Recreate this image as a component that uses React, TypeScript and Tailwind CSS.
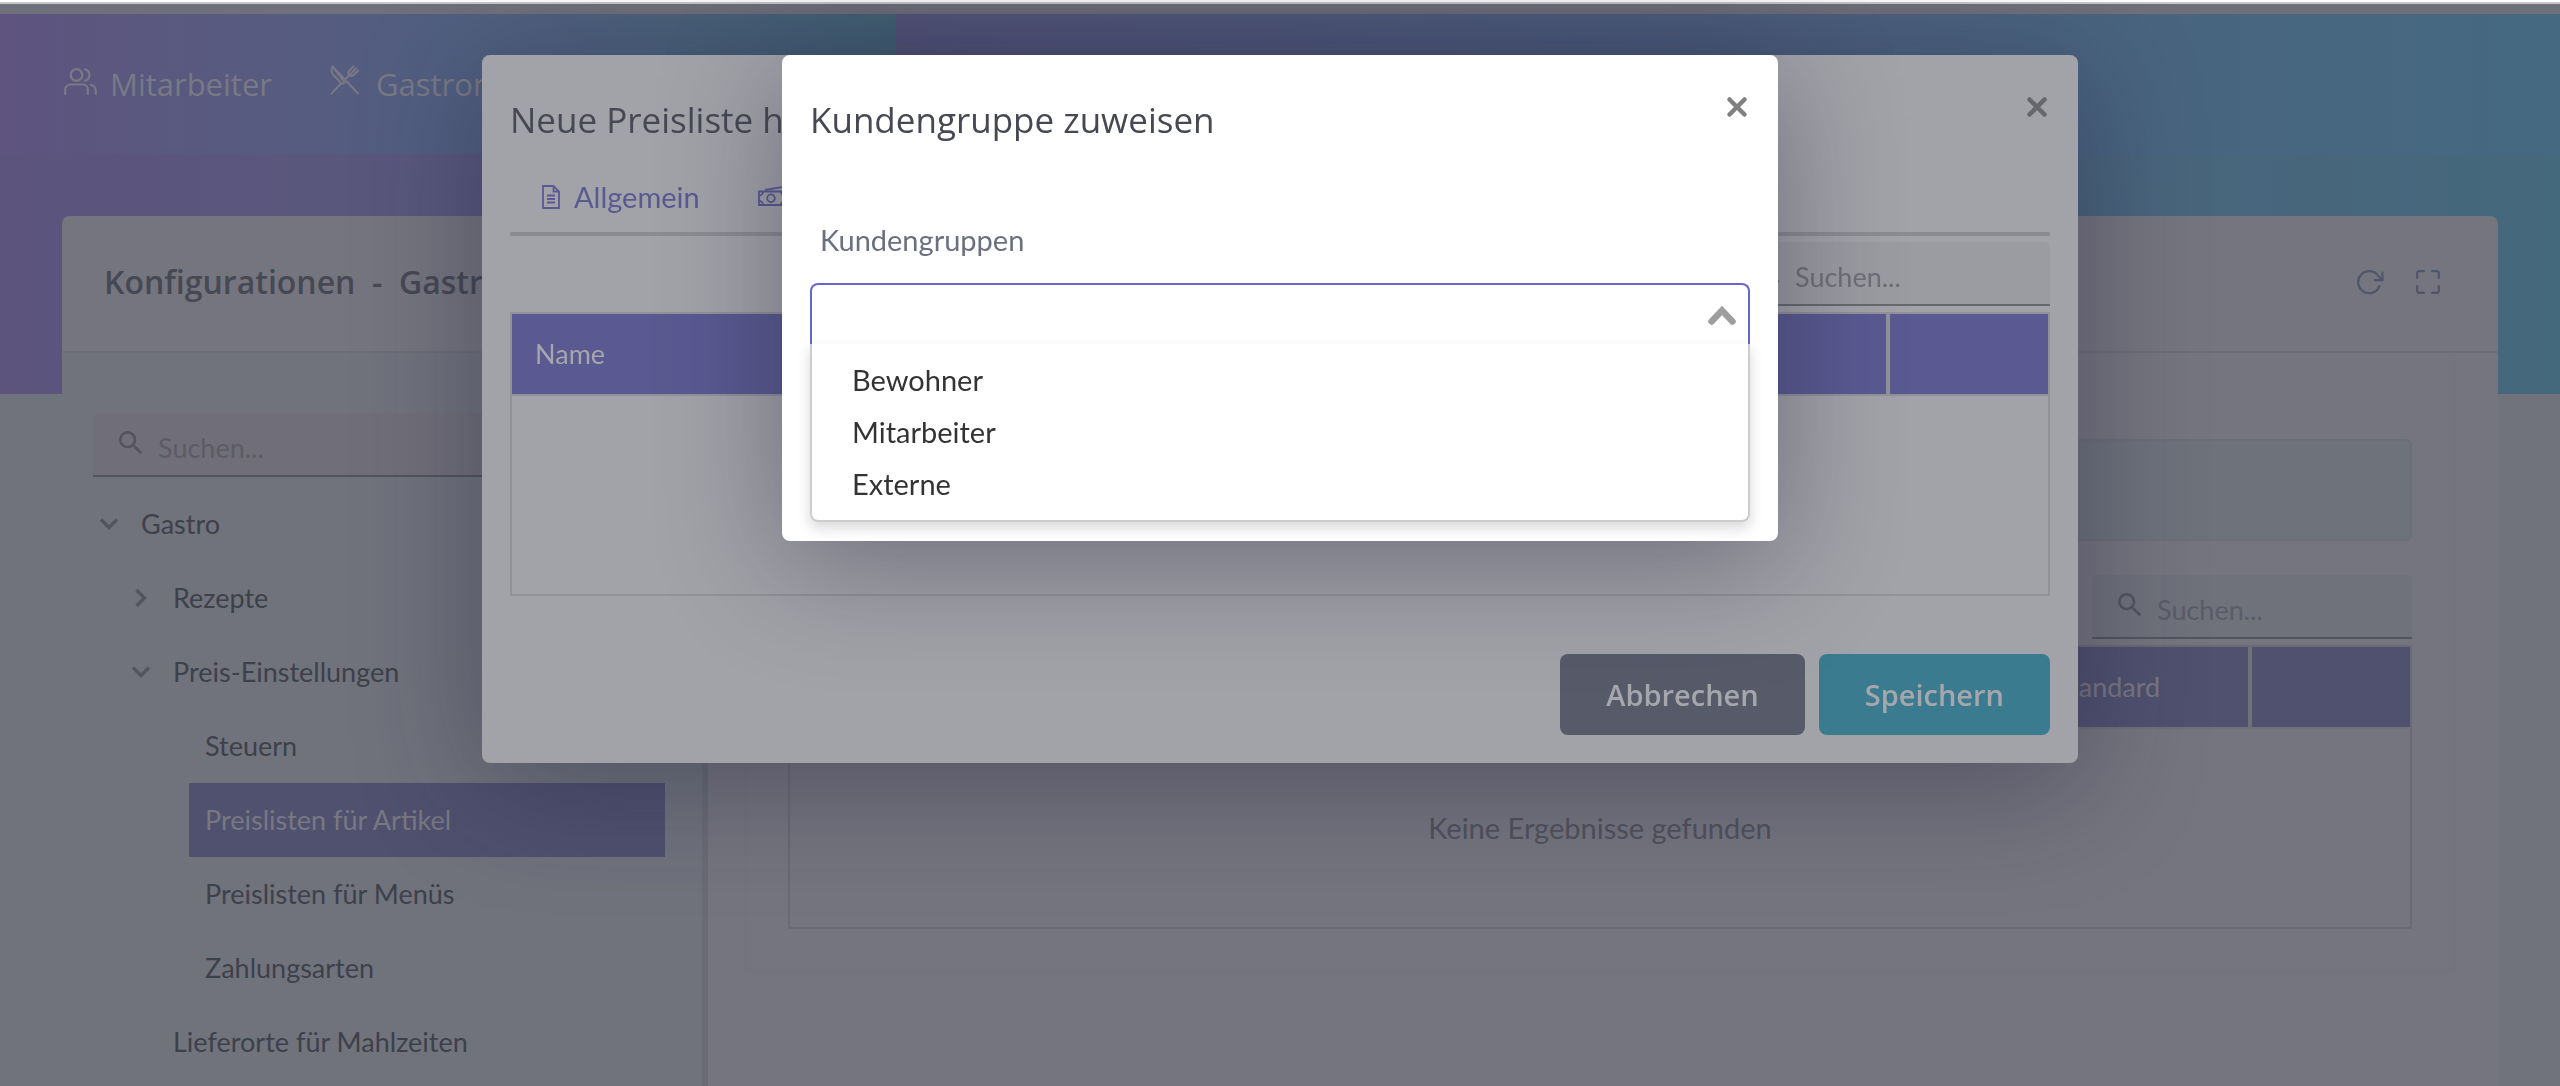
import React, { useState } from 'react';
import { MdSearch } from 'react-icons/md';

interface TreeItem {
  label: string;
  level: number;
  state?: 'open' | 'closed';
  active?: boolean;
}

const TREE: TreeItem[] = [
  { label: 'Gastro', level: 0, state: 'open' },
  { label: 'Rezepte', level: 1, state: 'closed' },
  { label: 'Preis-Einstellungen', level: 1, state: 'open' },
  { label: 'Steuern', level: 2 },
  { label: 'Preislisten für Artikel', level: 2, active: true },
  { label: 'Preislisten für Menüs', level: 2 },
  { label: 'Zahlungsarten', level: 2 },
  { label: 'Lieferorte für Mahlzeiten', level: 1 },
];

const INDENT = ['pl-0', 'pl-8', 'pl-16'];

const GROUPS = ['Bewohner', 'Mitarbeiter', 'Externe'];

const UsersIcon = () => (
  <svg width="34" height="30" viewBox="0 0 34 30" fill="none" stroke="currentColor" strokeWidth="2.2" strokeLinecap="round">
    <circle cx="12.5" cy="8" r="5.8" />
    <path d="M21 2.2a6 6 0 0 1 0 11.6" />
    <path d="M1.2 27v-4.500a5 5 0 0 1 5-5h12.600a5 5 0 0 1 5 5V27" />
    <path d="M26.800 17.800a6 6 0 0 1 5 6V27" />
  </svg>
);

const CutleryIcon = () => (
  <svg width="30" height="30" viewBox="0 0 30 30" fill="none" stroke="currentColor" strokeWidth="2" strokeLinecap="round" strokeLinejoin="round">
    <path d="M2.500 1.500c-1.600 3-1 6.500 1.500 9l7 7.500c1.300 1 2.600.8 3.500-.5Z" />
    <path d="M2.500 1.500 28 28.500" />
    <path d="M11 18.500 1.500 28.500M15.500 14l5-5" />
    <path d="M23.500 1.500l-4.500 4.500c-1 1.300-1 2.700.2 4 1.300 1.200 2.800 1.200 4.100.2l5-4.700M26 3.500l-5 5" />
  </svg>
);

const FileIcon = () => (
  <svg width="18" height="24" viewBox="0 0 18 24" fill="none" stroke="currentColor" strokeWidth="1.800">
    <path d="M1 1h10.500L17 6.500V23H1Z" />
    <path d="M11.500 1v5.500H17M5 10.500h8M5 14h8M5 17.500h8" />
  </svg>
);

const MoneyIcon = () => (
  <svg width="32" height="24" viewBox="0 0 32 24" fill="none" stroke="currentColor" strokeWidth="1.800">
    <path d="M1 6.500h26V20H1Z" />
    <path d="M7 5 29 1.200l2 12.500" />
    <circle cx="13" cy="13.200" r="3.800" />
    <path d="M1 10.500a4 4 0 0 0 4-4M1 16a4 4 0 0 1 4 4M27 10.500a4 4 0 0 1-4-4M27 16a4 4 0 0 0-4 4" />
  </svg>
);

const ReloadIcon = () => (
  <svg width="28" height="26" viewBox="0 0 28 26" fill="none" stroke="currentColor" strokeWidth="2.200" strokeLinecap="round" strokeLinejoin="round">
    <path d="M23.500 17a11 11 0 1 1-1.200-10l3.700 4" />
    <path d="M26.500 3.500v7.700h-7.500" />
  </svg>
);

const FullscreenIcon = () => (
  <svg width="24" height="24" viewBox="0 0 24 24" fill="none" stroke="currentColor" strokeWidth="2.200" strokeLinecap="round" strokeLinejoin="round">
    <path d="M8 1.200H3.200a2 2 0 0 0-2 2V8M16 1.200h4.800a2 2 0 0 1 2 2V8M8 22.800H3.200a2 2 0 0 1-2-2V16M16 22.800h4.800a2 2 0 0 0 2-2V16" />
  </svg>
);

const ChevronIcon = ({ className = '' }: { className?: string }) => (
  <svg className={className} width="20" height="20" viewBox="0 0 20 20" fill="none" stroke="currentColor" strokeWidth="3.400">
    <path d="M2 5.500 10 13.500 18 5.500" />
  </svg>
);

const CloseIcon = () => (
  <svg width="22" height="22" viewBox="0 0 22 22" fill="none" stroke="currentColor" strokeWidth="4.500" strokeLinecap="round">
    <path d="M3.500 3.500l15 15M18.500 3.500l-15 15" />
  </svg>
);

const CaretUpIcon = ({ className = '' }: { className?: string }) => (
  <svg className={className} width="28" height="20" viewBox="0 0 28 20" fill="none" stroke="currentColor" strokeWidth="6.500" strokeLinecap="round">
    <path d="M3.500 16.500 14 5.500l10.500 11" />
  </svg>
);

interface SearchFieldProps {
  label: string;
  className: string;
  iconClass: string;
}

const SearchField: React.FC<SearchFieldProps> = ({ label, className, iconClass }) => (
  <label className={`flex h-16 items-center gap-[11px] rounded-t-md border-b-2 pl-[22px] ${className}`}>
    <MdSearch size={32} className={`mb-[2px] shrink-0 ${iconClass}`} />
    <input
      type="search"
      aria-label={label}
      placeholder="Suchen..."
      className="w-full min-w-0 bg-transparent pt-2 text-[27px] outline-none placeholder:text-inherit"
    />
  </label>
);

interface ModalProps {
  title: string;
  className: string;
  closeClass: string;
  children: React.ReactNode;
}

const Modal: React.FC<ModalProps> = ({ title, className, closeClass, children }) => (
  <div className="fixed inset-0 flex items-start justify-center pt-[55px]">
    <section
      role="dialog"
      aria-label={title}
      className={`w-full rounded-lg px-7 pt-[41px] shadow-[0_20px_120px_rgba(30,30,60,0.42)] ${className}`}
    >
      <header className="flex items-start justify-between">
        <h2 className='font-["Open_Sans",sans-serif] text-[35px] leading-12 text-[#464853]'>{title}</h2>
        <button type="button" aria-label="Schließen" className={`pr-[2px] ${closeClass}`}>
          <CloseIcon />
        </button>
      </header>
      {children}
    </section>
  </div>
);

const Tree = () => (
  <ul className="mt-[10px]">
    {TREE.map((item) => (
      <li key={item.label} className={`flex h-[74px] items-center ${INDENT[item.level]}`}>
        <span className="flex w-8 shrink-0 justify-center text-[#54545f]">
          {item.state && <ChevronIcon className={item.state === 'closed' ? '-rotate-90' : ''} />}
        </span>
        <a
          href="#"
          className={`flex h-full flex-1 items-center pl-4 text-[27px] ${item.active ? 'bg-[#50506f] text-[#787882]' : 'text-[#3e404a]'}`}
        >
          {item.label}
        </a>
      </li>
    ))}
  </ul>
);

const Content = () => (
  <div className="min-w-0 flex-1 pr-[43px] pb-28 pl-[37px]">
    <div className="rounded-lg border border-t-0 border-[#72727c] px-[42px] pt-[86px] pb-[42px]">
      <div className="h-[102px] rounded-md border-2 border-[#6c6f78] bg-[#6e727b]" />
      <div className="mt-[34px] flex justify-end">
        <SearchField label="Preislisten suchen" className="w-80 border-[#53545e] bg-[#6f727b] text-[#5b5c67]" iconClass="text-[#53545e]" />
      </div>
      <div className="mt-[6px] border-2 border-[#6a6a74]">
        <table className="w-full border-separate border-spacing-0">
          <thead>
            <tr className="h-[82px] bg-[#50506f] text-left text-[27px] text-[#787882]">
              <th className="border-r-4 border-b-2 border-[#6f707a] pl-[23px] font-normal">Name</th>
              <th className="w-[220px] border-r-4 border-b-2 border-[#6f707a] pl-[23px] font-normal">Standard</th>
              <th className="w-[158px] border-b-2 border-[#6f707a]" aria-label="Aktionen" />
            </tr>
          </thead>
          <tbody>
            <tr>
              <td colSpan={3} className="h-[198px] text-center text-[29px] text-[#51525c]">
                Keine Ergebnisse gefunden
              </td>
            </tr>
          </tbody>
        </table>
      </div>
    </div>
  </div>
);

const PriceListModal = () => (
  <Modal title="Neue Preisliste hinzufügen" className="max-w-[1596px] bg-[#a2a3a8] pb-7" closeClass="text-[#66666b]">
    <nav className="mt-[22px] flex h-[70px] gap-[58px] border-b-4 border-[#8b8c91] pl-8 text-[29px] text-[#5a5991]">
      <a href="#" className="flex h-[62px] items-center gap-[14px]">
        <FileIcon />
        Allgemein
      </a>
      <a href="#" className="flex h-[62px] items-center gap-[14px]">
        <MoneyIcon />
        Preise
      </a>
    </nav>
    <div className="mt-[6px] flex justify-end">
      <SearchField label="Einträge suchen" className="w-80 border-[#68696e] bg-[#9b9ca1] text-[#6e6f75]" iconClass="text-[#68696e]" />
    </div>
    <div className="mt-[6px] border-2 border-[#909297]">
      <table className="w-full border-separate border-spacing-0">
        <thead>
          <tr className="h-[82px] bg-[#5a5991] text-left text-[27px] text-[#a6a7ac]">
            <th className="border-r-4 border-b-2 border-[#909297] pl-[23px] font-normal">Name</th>
            <th className="w-[158px] border-b-2 border-[#909297]" aria-label="Aktionen" />
          </tr>
        </thead>
        <tbody>
          <tr>
            <td colSpan={2} className="h-[198px]" />
          </tr>
        </tbody>
      </table>
    </div>
    <footer className='mt-[58px] flex justify-end gap-[14px] font-["Open_Sans",sans-serif] text-[29px] font-semibold text-[#a6a7ac]'>
      <button type="button" className="h-[81px] rounded-lg bg-[#575a69] px-[46px]">
        Abbrechen
      </button>
      <button type="button" className="h-[81px] rounded-lg bg-[#3b7b90] px-[46px]">
        Speichern
      </button>
    </footer>
  </Modal>
);

const GroupModal = () => {
  const [value, setValue] = useState('');

  return (
    <Modal title="Kundengruppe zuweisen" className="max-w-[996px] bg-white pb-[19px]" closeClass="text-[#808080]">
      <label htmlFor="customer-groups" className="mt-[76px] block pl-[10px] text-[29px] leading-10 text-[#6b7080]">
        Kundengruppen
      </label>
      <div className="mt-[23px] flex h-[61px] items-center rounded-t-lg border-2 border-b-0 border-[#6767c8] pr-3 pl-10">
        <input
          id="customer-groups"
          role="combobox"
          aria-expanded="true"
          aria-controls="customer-group-list"
          value={value}
          onChange={(e) => setValue(e.target.value)}
          className="min-w-0 flex-1 text-[29px] text-[#333333] outline-none"
        />
        <CaretUpIcon className="shrink-0 text-[#9e9e9e]" />
      </div>
      <ul
        id="customer-group-list"
        role="listbox"
        className="rounded-b-lg border-2 border-t-0 border-[#cccccc] py-[10px] shadow-[0_6px_14px_rgba(0,0,0,0.16)]"
      >
        {GROUPS.map((group) => (
          <li
            key={group}
            role="option"
            aria-selected={value === group}
            onClick={() => setValue(group)}
            className="flex h-13 cursor-pointer items-center pl-10 text-[29px] text-[#333333]"
          >
            {group}
          </li>
        ))}
      </ul>
    </Modal>
  );
};

export default function App() {
  return (
    <div className='flex min-h-screen flex-col bg-[#70727c] font-["Lato",sans-serif]'>
      <div className="h-[14px] shrink-0 border-t-2 border-white bg-[#70707a]">
        <div className="h-[2px] bg-[#c8c8c8]" />
      </div>
      <header className="flex h-[140px] shrink-0">
        <nav className='flex w-[35%] items-center gap-[58px] bg-linear-to-r from-[#5e547f] via-[#515f80] to-[#446375] pl-16 font-["Open_Sans",sans-serif] text-[31px] text-[#797985]'>
          <a href="#" className="flex items-center gap-3">
            <span className="mb-1"><UsersIcon /></span>
            Mitarbeiter
          </a>
          <a href="#" className="flex items-center gap-4">
            <span className="mb-2"><CutleryIcon /></span>
            Gastronomie
          </a>
        </nav>
        <div className="flex-1 bg-linear-to-r from-[#54567a] to-[#446980]" />
      </header>
      <div className="h-60 shrink-0 bg-linear-to-r from-[#5c547d] to-[#44687c]" />

      <main className="mx-[62px] -mt-[178px] flex flex-1 flex-col rounded-t-lg bg-[#75757f]">
        <header className="flex h-[137px] items-center justify-between border-b-2 border-[#6e6e78] pr-[58px] pb-1 pl-[42px]">
          <h1 className='font-["Open_Sans",sans-serif] text-[32px] font-semibold whitespace-pre text-[#464853]'>
            {'Konfigurationen  -  Gastronomie'}
          </h1>
          <div className="flex gap-8 text-[#50566a]">
            <button type="button" aria-label="Neu laden"><ReloadIcon /></button>
            <button type="button" aria-label="Vollbild"><FullscreenIcon /></button>
          </div>
        </header>
        <div className="flex flex-1">
          <aside className="w-[646px] shrink-0 border-r-6 border-[#696c76] bg-[#70737c] pt-[60px] pr-[37px] pl-[31px]">
            <SearchField label="Konfiguration suchen" className="border-[#53535d] bg-[#706f79] text-[#5c5b66]" iconClass="text-[#54545f]" />
            <Tree />
          </aside>
          <Content />
        </div>
      </main>

      <PriceListModal />
      <GroupModal />
    </div>
  );
}
